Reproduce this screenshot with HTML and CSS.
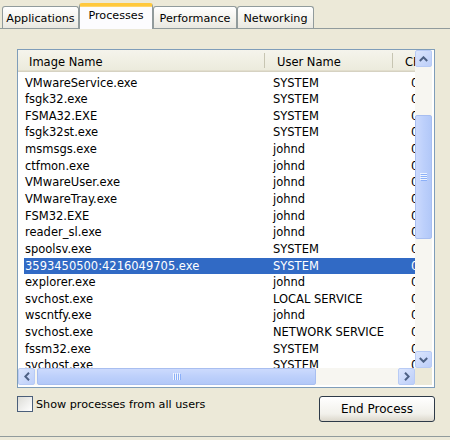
FILE: index.html
```html
<!DOCTYPE html>
<html>
<head>
<meta charset="utf-8">
<link rel="stylesheet" href="styles.css">
</head>
<body>
<div class="tabs">
  <div class="tab tab-apps">Applications</div>
  <div class="tab tab-proc selected">Processes</div>
  <div class="tab tab-perf">Performance</div>
  <div class="tab tab-net">Networking</div>
</div>
<div class="panel">
  <div class="list">
    <div class="content">
      <div class="header">
        <div class="hcell c1">Image Name</div>
        <div class="hcell c2">User Name</div>
        <div class="hcell c3">CPU</div>
      </div>
      <div class="rows">
        <div class="row"><span class="d1">VMwareService.exe</span><span class="d2">SYSTEM</span><span class="d3">00</span></div>
        <div class="row"><span class="d1">fsgk32.exe</span><span class="d2">SYSTEM</span><span class="d3">00</span></div>
        <div class="row"><span class="d1">FSMA32.EXE</span><span class="d2">SYSTEM</span><span class="d3">00</span></div>
        <div class="row"><span class="d1">fsgk32st.exe</span><span class="d2">SYSTEM</span><span class="d3">00</span></div>
        <div class="row"><span class="d1">msmsgs.exe</span><span class="d2">johnd</span><span class="d3">00</span></div>
        <div class="row"><span class="d1">ctfmon.exe</span><span class="d2">johnd</span><span class="d3">00</span></div>
        <div class="row"><span class="d1">VMwareUser.exe</span><span class="d2">johnd</span><span class="d3">00</span></div>
        <div class="row"><span class="d1">VMwareTray.exe</span><span class="d2">johnd</span><span class="d3">00</span></div>
        <div class="row"><span class="d1">FSM32.EXE</span><span class="d2">johnd</span><span class="d3">00</span></div>
        <div class="row"><span class="d1">reader_sl.exe</span><span class="d2">johnd</span><span class="d3">00</span></div>
        <div class="row"><span class="d1">spoolsv.exe</span><span class="d2">SYSTEM</span><span class="d3">00</span></div>
        <div class="row sel"><span class="d1">3593450500:4216049705.exe</span><span class="d2">SYSTEM</span><span class="d3">00</span></div>
        <div class="row"><span class="d1">explorer.exe</span><span class="d2">johnd</span><span class="d3">00</span></div>
        <div class="row"><span class="d1">svchost.exe</span><span class="d2">LOCAL SERVICE</span><span class="d3">00</span></div>
        <div class="row"><span class="d1">wscntfy.exe</span><span class="d2">johnd</span><span class="d3">00</span></div>
        <div class="row"><span class="d1">svchost.exe</span><span class="d2">NETWORK SERVICE</span><span class="d3">00</span></div>
        <div class="row"><span class="d1">fssm32.exe</span><span class="d2">SYSTEM</span><span class="d3">00</span></div>
        <div class="row"><span class="d1">svchost.exe</span><span class="d2">SYSTEM</span><span class="d3">00</span></div>
      </div>
    </div>
    <div class="vscroll">
      <div class="sbtn"><svg width="9" height="6" viewBox="0 0 9 6"><polyline points="0.8,5 4.5,1.3 8.2,5" fill="none" stroke="#4D6185" stroke-width="2"/></svg></div>
      <div class="vthumb"><svg width="7" height="8" viewBox="0 0 7 8"><path d="M0 0.5H7M0 2.5H7M0 4.5H7M0 6.5H7" stroke="#EEF4FE" stroke-width="1"/><path d="M1 1.5H7M1 3.5H7M1 5.5H7M1 7.5H7" stroke="#8CB0F8" stroke-width="1"/></svg></div>
      <div class="vspace"></div>
      <div class="sbtn"><svg width="9" height="6" viewBox="0 0 9 6"><polyline points="0.8,1 4.5,4.7 8.2,1" fill="none" stroke="#4D6185" stroke-width="2"/></svg></div>
    </div>
    <div class="hscroll">
      <div class="sbtn"><svg width="6" height="9" viewBox="0 0 6 9"><polyline points="5,0.8 1.3,4.5 5,8.2" fill="none" stroke="#4D6185" stroke-width="2"/></svg></div>
      <div class="hthumb"><svg width="8" height="7" viewBox="0 0 8 7"><path d="M0.5 0V7M2.5 0V7M4.5 0V7M6.5 0V7" stroke="#EEF4FE" stroke-width="1"/><path d="M1.5 1V7M3.5 1V7M5.5 1V7M7.5 1V7" stroke="#8CB0F8" stroke-width="1"/></svg></div>
      <div class="hspace"></div>
      <div class="sbtn"><svg width="6" height="9" viewBox="0 0 6 9"><polyline points="1,0.8 4.7,4.5 1,8.2" fill="none" stroke="#4D6185" stroke-width="2"/></svg></div>
    </div>
    <div class="corner"></div>
  </div>
  <div class="bottom">
    <label class="check"><span class="box"></span><span>Show processes from all users</span></label>
    <div class="button">End Process</div>
  </div>
</div>
</body>
</html>
```
FILE: styles.css
```css
html, body {
  margin: 0;
  padding: 0;
}
body {
  width: 450px;
  height: 440px;
  overflow: hidden;
  background: #ECE9D8;
  font-family: "DejaVu Sans", "Noto Sans", sans-serif;
  font-size: 11.2px;
  color: #000;
}
.tabs {
  position: relative;
  z-index: 1;
  display: flex;
  align-items: flex-end;
  height: 28px;
  padding-left: 2px;
}
.tab {
  box-sizing: border-box;
  height: 22px;
  border: 1px solid #919B9C;
  border-bottom: none;
  border-radius: 3px 3px 0 0;
  background: linear-gradient(#FFFFFF, #F3F2EC 60%, #E9E8E1);
  display: flex;
  justify-content: center;
  align-items: center;
  padding-top: 1px;
  white-space: nowrap;
}
.tab-apps { width: 77px; }
.tab-proc { width: 74px; }
.tab-perf { width: 84px; }
.tab-net { width: 77px; }
.tab.selected {
  height: 26px;
  margin-bottom: -1px;
  background: #FCFCFE;
  border-top: 3px solid #FFC83C;
  box-shadow: inset 0 1px 0 #FFD56A;
  align-items: flex-start;
  padding-top: 3px;
}
.panel {
  box-sizing: border-box;
  height: 409px;
  border-top: 1px solid #919B9C;
  border-bottom: 1px solid #919B9C;
  padding: 20px 15px 0 17px;
  background: #ECE9D8;
}
.list {
  box-sizing: border-box;
  width: 418px;
  height: 339px;
  border: 1px solid #7F9DB9;
  padding: 0 2px 2px 0;
  background: #FFFFFF;
  display: grid;
  grid-template-columns: 1fr 17px;
  grid-template-rows: 1fr 17px;
  font-size: 11.5px;
}
.content {
  overflow: hidden;
  min-width: 0;
  min-height: 0;
}
.header {
  display: flex;
  height: 22px;
  background: linear-gradient(#F5F4EC, #EBEADB);
  box-shadow: inset 0 -1px 0 #D6D2C2, inset 0 -2px 0 #E2DECD;
}
.hcell {
  box-sizing: border-box;
  flex: none;
  height: 22px;
  line-height: 24px;
  white-space: nowrap;
  overflow: hidden;
  background: linear-gradient(#C7C5B2, #C7C5B2) no-repeat right 3px / 1px 15px;
}
.hcell.c1 { width: 247px; padding-left: 11px; }
.hcell.c2 { width: 128px; padding-left: 12px; }
.hcell.c3 { width: 80px; padding-left: 12px; }
.rows {
  padding-top: 2.5px;
}
.row {
  display: flex;
  height: 16.65px;
  line-height: 17.5px;
  margin-left: 6px;
  white-space: nowrap;
}
.row.sel {
  background: #316AC5;
  color: #FFFFFF;
}
.d1 { flex: none; width: 241px; padding-left: 1px; box-sizing: border-box; }
.d2 { flex: none; width: 128px; padding-left: 8px; box-sizing: border-box; }
.d3 { flex: none; width: 60px; padding-left: 18px; box-sizing: border-box; }
.vscroll {
  display: flex;
  flex-direction: column;
  background: #F7F6F1;
  min-height: 0;
}
.hscroll {
  display: flex;
  background: #F7F6F1;
  min-width: 0;
}
.corner {
  background: #ECE9D8;
}
.sbtn {
  box-sizing: border-box;
  flex: none;
  width: 17px;
  height: 17px;
  border: 1px solid #B8CBF5;
  border-radius: 2px;
  background: linear-gradient(135deg, #DCE6FD, #BCCEF9);
  display: flex;
  align-items: center;
  justify-content: center;
}
.vthumb {
  box-sizing: border-box;
  flex: none;
  height: 124px;
  margin-top: 48px;
  border: 1px solid #A8BEF0;
  border-radius: 2px;
  background: linear-gradient(90deg, #CCDAFD, #BDD0FB 50%, #B2C8F8);
  display: flex;
  align-items: center;
  justify-content: center;
}
.vspace { flex: 1; }
.hthumb {
  box-sizing: border-box;
  flex: none;
  width: 279px;
  margin-left: 2px;
  border: 1px solid #A8BEF0;
  border-radius: 2px;
  background: linear-gradient(#CCDAFD, #BDD0FB 50%, #B2C8F8);
  display: flex;
  align-items: center;
  justify-content: center;
}
.hspace { flex: 1; }
.bottom {
  display: flex;
  justify-content: space-between;
  align-items: flex-start;
  margin-top: 8px;
}
.check {
  display: flex;
  align-items: center;
  gap: 3px;
  margin-top: 0;
  margin-left: 0;
}
.box {
  box-sizing: border-box;
  width: 16px;
  height: 16px;
  border: 1px solid #4B5F7A;
  background: linear-gradient(135deg, #DCDCD7, #FFFFFF);
}
.button {
  box-sizing: border-box;
  width: 116px;
  height: 26px;
  border: 1px solid #2D3A48;
  border-radius: 3px;
  background: linear-gradient(#FFFFFF, #F2F1EB 70%, #DCD8CC);
  display: flex;
  align-items: center;
  justify-content: center;
  font-size: 12px;
}
```
